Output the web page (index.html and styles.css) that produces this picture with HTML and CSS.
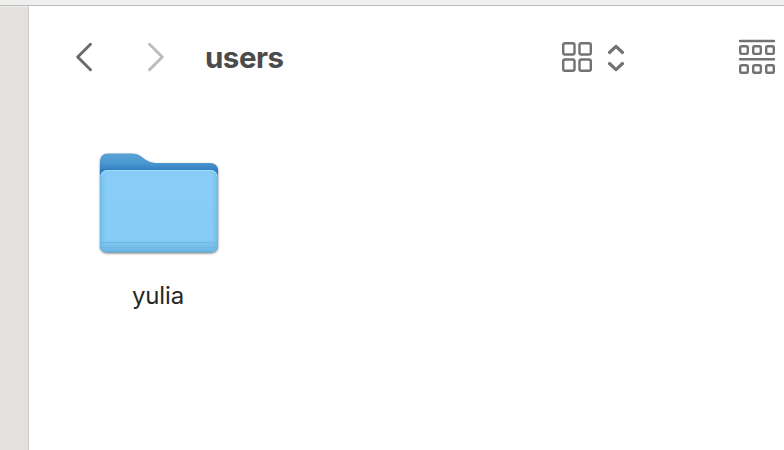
FILE: index.html
```html
<!DOCTYPE html>
<html lang="en">
<head>
<meta charset="utf-8">
<title>users</title>
<link rel="stylesheet" href="styles.css">
</head>
<body>
<div class="desktop-edge"></div>
<div class="window">
  <aside class="sidebar"></aside>
  <main class="content">
    <header class="toolbar">
      <svg class="chevron back" viewBox="0 0 20 32"><path d="M16.500 3.300 3.700 16l12.800 12.700"/></svg>
      <svg class="chevron forward" viewBox="0 0 20 32"><path d="M3.500 3.300l12.800 12.700-12.800 12.700"/></svg>
      <h1 class="title">users</h1>
      <svg class="icon view-grid" viewBox="0 0 32 32">
        <rect x="2.2" y="2.2" width="11.3" height="11.3" rx="1.8"/>
        <rect x="18.5" y="2.2" width="11.3" height="11.3" rx="1.8"/>
        <rect x="2.2" y="18.5" width="11.3" height="11.3" rx="1.8"/>
        <rect x="18.5" y="18.5" width="11.3" height="11.3" rx="1.8"/>
      </svg>
      <svg class="icon stepper" viewBox="0 0 20 32"><path d="M3.5 10.5 10 4.4l6.500 6.100M3.500 21.500l6.500 6.100 6.500-6.100"/></svg>
      <svg class="icon group" viewBox="0 0 38 38">
        <path d="M2 3h34M2 21.300h34"/>
        <rect x="2.200" y="8.300" width="7.600" height="7.600" rx="1.600"/>
        <rect x="15.200" y="8.300" width="7.600" height="7.600" rx="1.600"/>
        <rect x="28.200" y="8.300" width="7.600" height="7.600" rx="1.600"/>
        <rect x="2.200" y="27.200" width="7.600" height="7.600" rx="1.600"/>
        <rect x="15.200" y="27.200" width="7.600" height="7.600" rx="1.600"/>
        <rect x="28.200" y="27.200" width="7.600" height="7.600" rx="1.600"/>
      </svg>
    </header>
    <section class="files">
      <figure class="file">
        <svg class="folder" viewBox="0 0 128 110">
          <defs>
            <linearGradient id="back" x1="0" y1="0" x2="0" y2="1">
              <stop offset="0" stop-color="#5aa3d6"/>
              <stop offset=".1" stop-color="#4a97d0"/>
              <stop offset=".18" stop-color="#2f79be"/>
            </linearGradient>
            <linearGradient id="front" x1="0" y1="0" x2="0" y2="1">
              <stop offset="0" stop-color="#84caf5"/>
              <stop offset=".08" stop-color="#89cdf8"/>
              <stop offset=".84" stop-color="#86ccf6"/>
              <stop offset=".97" stop-color="#70b9e6"/>
              <stop offset="1" stop-color="#5facd9"/>
            </linearGradient>
            <linearGradient id="sides">
              <stop offset="0" stop-color="#62afdf" stop-opacity=".7"/>
              <stop offset=".06" stop-color="#7fc7f4" stop-opacity="0"/>
              <stop offset=".94" stop-color="#7fc7f4" stop-opacity="0"/>
              <stop offset="1" stop-color="#62afdf" stop-opacity=".7"/>
            </linearGradient>
          </defs>
          <path fill="url(#back)" d="M5 12q0-8.500 8-8.500h24c4 0 6 .8 9 3l5 3.600q4 2.900 9 2.900h55q8 0 8 8v73q0 8-8 8H13q-8 0-8-8z"/>
          <path fill="url(#front)" d="M5 29q0-9 8-9h102q8 0 8 9v65.500q0 8-8 8H13q-8 0-8-8z"/>
          <path fill="url(#sides)" d="M5 29q0-9 8-9h102q8 0 8 9v65.500q0 8-8 8H13q-8 0-8-8z"/>
          <path class="highlight" d="M6 26q1-5.500 7-5.500h102q6 0 7 5.500"/>
          <path class="crease" d="M5 92.500h118M5 97.500h118"/>
        </svg>
        <figcaption class="name">yulia</figcaption>
      </figure>
    </section>
  </main>
</div>
</body>
</html>
```
FILE: styles.css
```css
* { box-sizing: border-box; }

body {
  margin: 0;
  height: 450px;
  display: flex;
  flex-direction: column;
  overflow: hidden;
  background: #fff;
  font-family: Inter, "Liberation Sans", sans-serif;
}

.desktop-edge {
  flex: 0 0 6px;
  background: #efefee;
  border-bottom: 1px solid #bcbaba;
}

.window { flex: 1; display: flex; }

.sidebar {
  flex: 0 0 29px;
  background: #e2e1df;
  border-top: 1px solid #efeeed;
  border-right: 1px solid #d0cfce;
}

.content { flex: 1; min-width: 0; }

.toolbar {
  height: 102px;
  padding-left: 45px;
  display: flex;
  align-items: center;
}

.toolbar svg {
  flex: none;
  fill: none;
  stroke-linecap: round;
  stroke-linejoin: round;
}

.chevron { width: 20px; height: 32px; stroke-width: 3; }
.back { stroke: #6c6c6c; }
.forward { stroke: #bcbcbc; margin-left: 52px; }

.title {
  flex: none;
  width: 395px;
  margin: 0;
  padding-left: 39px;
  color: #4b4b4b;
  font-size: 29.5px;
  font-weight: 700;
  line-height: 36px;
  letter-spacing: -0.5px;
}

.icon { stroke: #727272; }
.view-grid { width: 32px; height: 32px; stroke-width: 2.4; }
.stepper { width: 20px; height: 32px; stroke-width: 3.2; margin: 2px 0 0 13px; }
.group { width: 38px; height: 38px; stroke-width: 2.4; margin-left: 112px; }

.files { display: flex; padding: 42px 0 0 66px; }

.file {
  width: 128px;
  margin: 0;
  display: flex;
  flex-direction: column;
  align-items: center;
}

.folder {
  width: 128px;
  height: 110px;
  filter: drop-shadow(0 1px 1px rgba(0, 0, 0, 0.5));
}

.highlight { fill: none; stroke: #a4def9; stroke-width: 1; }
.crease { fill: none; stroke: #6bb5e3; stroke-width: 1.2; opacity: 0.75; }

.name {
  margin-top: 20px;
  padding-right: 2px;
  color: #272727;
  font-size: 24px;
  line-height: 32px;
  letter-spacing: -0.15px;
}
```
